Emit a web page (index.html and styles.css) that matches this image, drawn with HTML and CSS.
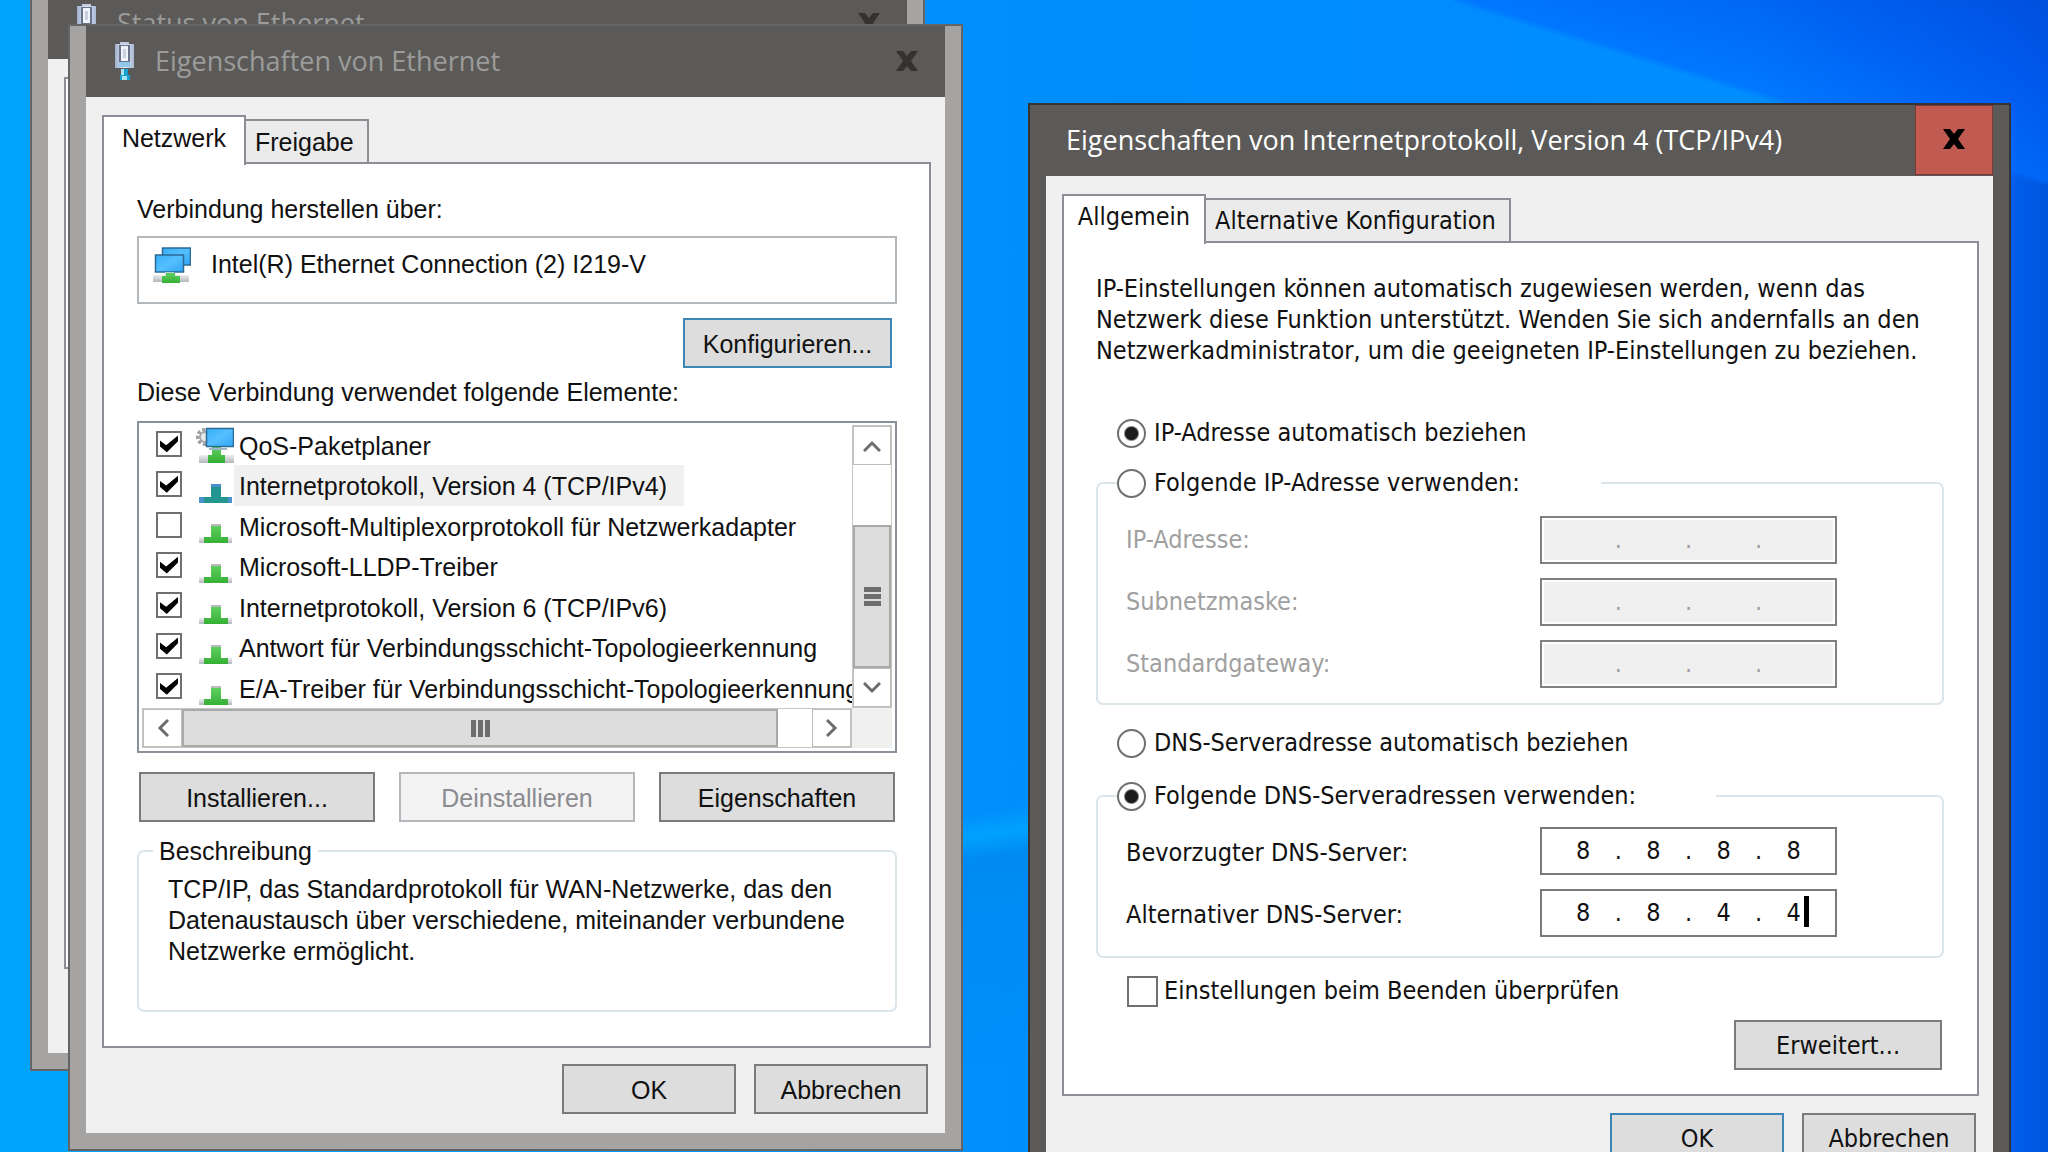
FILE: index.html
```html
<!DOCTYPE html>
<html lang="de">
<head>
<meta charset="utf-8">
<title>Eigenschaften von Internetprotokoll, Version 4 (TCP/IPv4)</title>
<link rel="stylesheet" href="styles.css">
</head>
<body>
<svg class="sprites" aria-hidden="true">
  <defs>
    <linearGradient id="screen" x1="0" y1="0" x2="1" y2="1"><stop offset="0" stop-color="#35b0f8"/><stop offset=".5" stop-color="#55bfff"/><stop offset="1" stop-color="#2fa6f5"/></linearGradient>
    <linearGradient id="green" x1="0" y1="0" x2="0" y2="1"><stop offset="0" stop-color="#5fcf5f"/><stop offset="1" stop-color="#35b035"/></linearGradient>
    <linearGradient id="silver" x1="0" y1="0" x2="0" y2="1"><stop offset="0" stop-color="#eceef0"/><stop offset="1" stop-color="#b4b7ba"/></linearGradient>
    <linearGradient id="metal" x1="0" y1="0" x2="1" y2="0"><stop offset="0" stop-color="#9fb0cd"/><stop offset=".5" stop-color="#e6ebf5"/><stop offset="1" stop-color="#a9b8d4"/></linearGradient>
    <symbol id="plug" viewBox="0 0 20 38">
      <rect x="5" y="0" width="9" height="4" fill="#c3cde0"/>
      <rect x="0" y="2" width="19" height="24" fill="url(#metal)"/>
      <rect x="4" y="3" width="11" height="18" fill="#68728a"/>
      <rect x="6" y="4" width="7" height="15" fill="#f0f3f9"/>
      <rect x="8" y="7" width="3" height="9" fill="#c8d0df"/>
      <rect x="4" y="20" width="11" height="5" fill="#8fc6ea"/>
      <path d="M6 27h7v6h2v5H5v-5h1z" fill="#169fd0"/>
      <path d="M6 27h3v6H6zM7 34h5v4H7z" fill="#a9e6f5"/>
    </symbol>
    <symbol id="network" viewBox="0 0 38 36">
      <rect x="9.500" y="1" width="28" height="17" fill="url(#screen)" stroke="#2b6a94" stroke-width="1.500"/>
      <rect x="2.500" y="8" width="28" height="17" fill="url(#screen)" stroke="#2b6a94" stroke-width="1.500"/>
      <rect x="12" y="25" width="9" height="3" fill="#b9cfd9"/>
      <rect x="0" y="28" width="36" height="7" fill="url(#silver)"/>
      <path d="M13 26h9v3h5v7H9v-7h4z" fill="url(#green)"/>
    </symbol>
    <symbol id="protocol" viewBox="0 0 34 20">
      <rect x="0" y="13" width="33" height="6" fill="url(#silver)"/>
      <rect x="12" y="0" width="10" height="3" fill="#b9bcbf"/>
      <path d="M12 2h10v11h7v6H5v-6h7z" fill="url(#green)"/>
    </symbol>
    <symbol id="protocol-active" viewBox="0 0 34 20">
      <rect x="0" y="13" width="33" height="6" fill="#4a90cc"/>
      <path d="M12 0h10v13h7v6H5v-6h7z" fill="#25958f"/>
      <rect x="12" y="0" width="10" height="3" fill="#4a90cc"/>
    </symbol>
    <symbol id="service" viewBox="0 0 38 38">
      <circle cx="9" cy="11" r="7" fill="none" stroke="#9b9ea1" stroke-width="4" stroke-dasharray="3 2"/>
      <circle cx="9" cy="11" r="5" fill="#e8e9ea" stroke="#a6a9ac" stroke-width="2"/>
      <rect x="3" y="29" width="35" height="8" fill="url(#silver)"/>
      <path d="M16 21h9v8h4v8H12v-8h4z" fill="url(#green)"/>
      <rect x="13" y="22" width="18" height="2" fill="#9db6c6"/>
      <rect x="10.500" y="2.500" width="27" height="18" fill="url(#screen)" stroke="#2b6a94" stroke-width="1.500"/>
    </symbol>
    <symbol id="close" viewBox="0 0 22 20">
      <path d="M0 0h7l4 5 4-5h7l-7 10 7 10h-7l-4-5-4 5H0l7-10z" fill="currentColor"/>
    </symbol>
    <symbol id="chevron" viewBox="0 0 18 12">
      <path d="M1 11l8-8 8 8" fill="none" stroke="#6d6d6d" stroke-width="3"/>
    </symbol>
  </defs>
</svg>

<main class="desktop">
  <section class="window window-status inactive" aria-label="Status von Ethernet">
    <header class="titlebar">
      <svg class="title-icon"><use href="#plug"/></svg>
      <h2 class="title">Status von Ethernet</h2>
      <button class="close" aria-label="Schließen"><svg><use href="#close"/></svg></button>
    </header>
    <div class="client"><div class="sheet sheet-behind"></div></div>
  </section>

  <section class="window window-ethernet inactive">
    <header class="titlebar">
      <svg class="title-icon"><use href="#plug"/></svg>
      <h2 class="title">Eigenschaften von Ethernet</h2>
      <button class="close" aria-label="Schließen"><svg><use href="#close"/></svg></button>
    </header>
    <div class="client">
      <div class="tabs" role="tablist">
        <button class="tab active" role="tab" aria-selected="true">Netzwerk</button>
        <button class="tab" role="tab" aria-selected="false">Freigabe</button>
      </div>
      <div class="sheet">
        <p class="caption">Verbindung herstellen über:</p>
        <div class="adapter">
          <svg class="adapter-icon"><use href="#network"/></svg>
          <span>Intel(R) Ethernet Connection (2) I219-V</span>
        </div>
        <button class="button default configure">Konfigurieren...</button>
        <p class="caption elements-caption">Diese Verbindung verwendet folgende Elemente:</p>
        <div class="listbox">
          <div class="items">
            <label class="item"><input class="check" type="checkbox" checked><svg class="service-icon"><use href="#service"/></svg><span class="name">QoS-Paketplaner</span></label>
            <label class="item"><input class="check" type="checkbox" checked><svg class="item-icon"><use href="#protocol-active"/></svg><span class="name selected">Internetprotokoll, Version 4 (TCP/IPv4)</span></label>
            <label class="item"><input class="check" type="checkbox"><svg class="item-icon"><use href="#protocol"/></svg><span class="name">Microsoft-Multiplexorprotokoll für Netzwerkadapter</span></label>
            <label class="item"><input class="check" type="checkbox" checked><svg class="item-icon"><use href="#protocol"/></svg><span class="name">Microsoft-LLDP-Treiber</span></label>
            <label class="item"><input class="check" type="checkbox" checked><svg class="item-icon"><use href="#protocol"/></svg><span class="name">Internetprotokoll, Version 6 (TCP/IPv6)</span></label>
            <label class="item"><input class="check" type="checkbox" checked><svg class="item-icon"><use href="#protocol"/></svg><span class="name">Antwort für Verbindungsschicht-Topologieerkennung</span></label>
            <label class="item"><input class="check" type="checkbox" checked><svg class="item-icon"><use href="#protocol"/></svg><span class="name">E/A-Treiber für Verbindungsschicht-Topologieerkennung</span></label>
          </div>
          <div class="scrollbar vertical">
            <button class="arrow" aria-label="Nach oben"><svg><use href="#chevron"/></svg></button>
            <div class="space-before"></div>
            <div class="thumb"><i></i><i></i><i></i></div>
            <button class="arrow down" aria-label="Nach unten"><svg><use href="#chevron"/></svg></button>
          </div>
          <div class="scrollbar horizontal">
            <button class="arrow left" aria-label="Nach links"><svg><use href="#chevron"/></svg></button>
            <div class="thumb"><i></i><i></i><i></i></div>
            <div class="space-after"></div>
            <button class="arrow right" aria-label="Nach rechts"><svg><use href="#chevron"/></svg></button>
          </div>
          <div class="corner"></div>
        </div>
        <div class="actions">
          <button class="button">Installieren...</button>
          <button class="button" disabled>Deinstallieren</button>
          <button class="button">Eigenschaften</button>
        </div>
        <fieldset class="group description">
          <legend>Beschreibung</legend>
          <p>TCP/IP, das Standardprotokoll für WAN-Netzwerke, das den Datenaustausch über verschiedene, miteinander verbundene Netzwerke ermöglicht.</p>
        </fieldset>
      </div>
      <footer class="footer">
        <button class="button">OK</button>
        <button class="button">Abbrechen</button>
      </footer>
    </div>
  </section>

  <section class="window window-ipv4">
    <header class="titlebar">
      <h1 class="title">Eigenschaften von Internetprotokoll, Version 4 (TCP/IPv4)</h1>
      <button class="close" aria-label="Schließen"><svg><use href="#close"/></svg></button>
    </header>
    <div class="client">
      <div class="tabs" role="tablist">
        <button class="tab active" role="tab" aria-selected="true">Allgemein</button>
        <button class="tab" role="tab" aria-selected="false">Alternative Konfiguration</button>
      </div>
      <div class="sheet">
        <p class="intro">IP-Einstellungen können automatisch zugewiesen werden, wenn das<br>Netzwerk diese Funktion unterstützt. Wenden Sie sich andernfalls an den<br>Netzwerkadministrator, um die geeigneten IP-Einstellungen zu beziehen.</p>
        <label class="option option-ip"><input class="radio" type="radio" name="ip" checked>IP-Adresse automatisch beziehen</label>
        <fieldset class="group addresses">
          <legend><label class="option"><input class="radio" type="radio" name="ip">Folgende IP-Adresse verwenden:</label></legend>
          <div class="field disabled"><label for="ip1">IP-Adresse:</label><div class="ip"><input id="ip1" disabled>.<input aria-label="IP-Adresse 2" disabled>.<input aria-label="IP-Adresse 3" disabled>.<input aria-label="IP-Adresse 4" disabled></div></div>
          <div class="field disabled"><label for="mask1">Subnetzmaske:</label><div class="ip"><input id="mask1" disabled>.<input aria-label="Subnetzmaske 2" disabled>.<input aria-label="Subnetzmaske 3" disabled>.<input aria-label="Subnetzmaske 4" disabled></div></div>
          <div class="field disabled"><label for="gate1">Standardgateway:</label><div class="ip"><input id="gate1" disabled>.<input aria-label="Standardgateway 2" disabled>.<input aria-label="Standardgateway 3" disabled>.<input aria-label="Standardgateway 4" disabled></div></div>
        </fieldset>
        <label class="option option-dns"><input class="radio" type="radio" name="dns">DNS-Serveradresse automatisch beziehen</label>
        <fieldset class="group servers">
          <legend><label class="option"><input class="radio" type="radio" name="dns" checked>Folgende DNS-Serveradressen verwenden:</label></legend>
          <div class="field"><label for="dns1">Bevorzugter DNS-Server:</label><div class="ip"><input id="dns1" value="8">.<input aria-label="Bevorzugter DNS-Server 2" value="8">.<input aria-label="Bevorzugter DNS-Server 3" value="8">.<input aria-label="Bevorzugter DNS-Server 4" value="8"></div></div>
          <div class="field"><label for="alt1">Alternativer DNS-Server:</label><div class="ip"><input id="alt1" value="8">.<input aria-label="Alternativer DNS-Server 2" value="8">.<input aria-label="Alternativer DNS-Server 3" value="4">.<input aria-label="Alternativer DNS-Server 4" value="4"><span class="caret"></span></div></div>
        </fieldset>
        <label class="option validate"><input class="check large" type="checkbox">Einstellungen beim Beenden überprüfen</label>
        <button class="button advanced">Erweitert...</button>
      </div>
      <footer class="footer">
        <button class="button default">OK</button>
        <button class="button">Abbrechen</button>
      </footer>
    </div>
  </section>
</main>
</body>
</html>
```

FILE: styles.css
```css
* { box-sizing: border-box; }

body {
  margin: 0;
  color: #111;
  font: 25px/30px "Liberation Sans", Arial, sans-serif;
}

button, input { font: inherit; color: inherit; margin: 0; padding: 0; }
p, h1, h2 { margin: 0; }
svg { display: block; flex: none; }
.sprites { position: absolute; width: 0; height: 0; }

/* Wallpaper */
.desktop {
  position: relative;
  height: 100vh;
  overflow: hidden;
  background:
    linear-gradient(172deg, transparent 70%, rgba(0, 174, 255, .6) 72%, rgba(0, 130, 225, .35) 74%, transparent 92%) 48% 0 / 8% 100% no-repeat,
    linear-gradient(to top right, transparent 49%, rgba(0, 110, 255, .7) 51%, rgba(0, 90, 240, .75) 75%, rgba(0, 78, 220, .8)) 100% 0 / 29% 16% no-repeat,
    linear-gradient(90deg, #00a5fb 0, #00a2fb 10%, #008ffb 46%, #008cff 70%, #008eff 86%, #005fee 98%, #0055dc 100%);
}

/* Windows */
.window {
  position: absolute;
  width: 895px;
  padding: 0 16px 16px;
  border: 2px solid #636466;
  background: #a5a4a2;
}
.window-status { left: 30px; top: -14px; height: 1085px; display: flex; flex-direction: column; }
.window-ethernet { left: 68px; top: 24px; }
.window-ipv4 {
  left: 1028px;
  top: 103px;
  width: 983px;
  border-color: #343434;
  background: #5b5a58;
  font-family: "DejaVu Sans Condensed", "DejaVu Sans", Tahoma, sans-serif;
}

.titlebar {
  display: flex;
  align-items: center;
  height: 71px;
  padding-bottom: 2px;
  background: #5b5a58;
  color: #fff;
}
.title {
  flex: 1;
  font: 27px/36px "Open Sans", "Segoe UI", sans-serif;
  white-space: nowrap;
}
.window-ipv4 .title { padding-left: 20px; }
.inactive .title { color: #9b9c9a; }
.title-icon { width: 20px; height: 38px; margin: 0 20px 0 29px; }
.close {
  display: grid;
  place-items: center;
  width: 76px;
  height: 70px;
  align-self: start;
  border: 0;
  background: none;
  color: #333231;
}
.close svg { width: 22px; height: 20px; }
.window-ipv4 .close { width: 78px; height: 70px; padding-bottom: 3px; border: 1px solid #7c3832; background: #c15a50; color: #000; }

.client { flex: 1; padding: 18px 14px 19px 16px; background: #f0f0f0; }

/* Tabs */
.tabs { display: flex; align-items: flex-end; height: 47px; }
.tab {
  height: 43px;
  padding: 0 13px 0 9px;
  border: solid #8b8e97;
  border-width: 2px 2px 0 0;
  background: #ebebeb;
}
.tab.active {
  position: relative;
  width: 144px;
  height: 50px;
  margin-bottom: -3px;
  padding: 0 0 7px;
  border-left-width: 2px;
  background: #fff;
}
.sheet {
  padding: 30px 32px 34px 33px;
  border: 2px solid #8b8e97;
  background: #fff;
}
.sheet-behind { height: 892px; }

/* Controls */
.button {
  height: 50px;
  padding-top: 2px;
  border: 2px solid #7b7b7b;
  background: #ddd;
}
.button.default { border-color: #3f86b8; }
.button:disabled { border-color: #b4b8bc; background: #f3f3f3; color: #8b8b90; }

.check {
  appearance: none;
  display: grid;
  place-items: center;
  flex: none;
  width: 26px;
  height: 26px;
  border: 2px solid #707070;
  background: #fff;
}
.check:checked::before {
  content: "";
  width: 18px;
  height: 18px;
  background: #000;
  clip-path: polygon(0 32%, 34% 58%, 100% 4%, 100% 36%, 38% 98%, 0 66%);
}
.check.large { width: 31px; height: 31px; }

.radio {
  appearance: none;
  flex: none;
  width: 29px;
  height: 29px;
  border: 2px solid #707070;
  border-radius: 50%;
  background: #fff;
}
.radio:checked { background: radial-gradient(circle, #1c1c1c 6px, #fff 8px); }

.group {
  min-width: 0;
  margin: 0;
  border: 2px solid #dbe5ec;
  border-radius: 7px;
}
.group legend { padding: 0; }

.footer { display: flex; justify-content: flex-end; gap: 18px; padding: 16px 3px 0 0; }
.footer .button { width: 174px; }

/* Ethernet dialog */
.adapter {
  display: flex;
  gap: 20px;
  height: 68px;
  margin-top: 12px;
  padding: 9px 14px;
  border: 2px solid #b3b8bd;
  line-height: 34px;
}
.adapter-icon { width: 38px; height: 36px; }
.configure { display: block; width: 209px; margin: 14px 5px 0 auto; }
.elements-caption { margin-top: 9px; }

.listbox {
  display: grid;
  grid-template: minmax(0, 1fr) 40px / minmax(0, 1fr) 40px;
  height: 332px;
  margin-top: 14px;
  padding: 2px 3px 3px;
  border: 2px solid #89919a;
}
.items { display: flex; flex-direction: column; overflow: hidden; }
.item {
  display: flex;
  align-items: center;
  flex: 1;
  padding-left: 14px;
  white-space: nowrap;
}
.item .check { margin-bottom: 3px; }
.item-icon { width: 34px; height: 20px; margin: 16px 1px 0 17px; }
.service-icon { width: 38px; height: 38px; margin-left: 14px; }
.name { align-self: stretch; padding: 6px 17px 0 5px; }
.name.selected { background: #f0f0f0; }

.scrollbar { display: flex; background: #fff; border: 1px solid #c6c6c6; }
.vertical { flex-direction: column; }
.arrow {
  display: grid;
  place-items: center;
  flex: 0 0 39px;
  border: 1px solid #bdbdbd;
  background: #fff;
}
.arrow svg { width: 18px; height: 12px; }
.down svg { transform: rotate(180deg); }
.left svg { transform: rotate(-90deg); }
.right svg { transform: rotate(90deg); }
.thumb {
  display: flex;
  flex: 1;
  align-items: center;
  justify-content: center;
  gap: 2px;
  border: 2px solid #a9a9a9;
  background: #ddd;
}
.vertical .thumb { flex-direction: column; }
.thumb i { width: 5px; height: 17px; background: #6d6d6d; }
.vertical .thumb i { width: 17px; height: 5px; }
.space-before { flex: 0 0 60px; }
.space-after { flex: 0 0 34px; }
.corner { background: #f0f0f0; }

.actions {
  display: grid;
  grid-template-columns: repeat(3, 1fr);
  gap: 24px;
  margin-top: 19px;
  padding: 0 2px;
}
.description { margin-top: 14px; padding: 8px 29px 43px 14px; line-height: 31px; }
.description legend { padding: 0 6px; line-height: 30px; }
.description p { padding-left: 15px; }

/* IPv4 dialog */
.intro { line-height: 31px; white-space: nowrap; }
.option { display: flex; align-items: center; gap: 8px; height: 32px; white-space: nowrap; }
.option-ip { margin: 51px 0 18px; padding-left: 21px; }
.option-dns { margin: 22px 0 21px; padding-left: 21px; }
.addresses legend, .servers legend { margin-left: 19px; }
.addresses legend { width: 484px; }
.servers legend { width: 599px; }
.addresses { padding: 17px 0 15px; }
.servers { padding: 15px 0 19px; }
.field {
  display: flex;
  align-items: center;
  justify-content: space-between;
  padding: 0 105px 0 28px;
}
.field + .field { margin-top: 14px; }
.field.disabled { color: #a0a0a0; }
.servers .field > label { padding-top: 4px; }
.ip {
  position: relative;
  display: flex;
  align-items: center;
  justify-content: center;
  width: 297px;
  height: 48px;
  border: 2px solid #7a7a7a;
  background: #fff;
}
.disabled .ip { border-color: #808080; background: #f0f0f0; box-shadow: inset 0 0 0 2px #fff; }
.ip input {
  width: 63px;
  border: 0;
  outline: 0;
  background: none;
  text-align: center;
}
.caret { position: absolute; right: 26px; top: 5px; width: 5px; height: 31px; background: #000; }
.validate { margin: 17px 0 13px; padding-left: 31px; gap: 6px; }
.advanced { display: block; width: 208px; margin: 0 2px 0 auto; }
.window-ipv4 .sheet { padding: 30px 33px 24px 32px; }
.window-ipv4 .footer { padding-top: 17px; }
```
